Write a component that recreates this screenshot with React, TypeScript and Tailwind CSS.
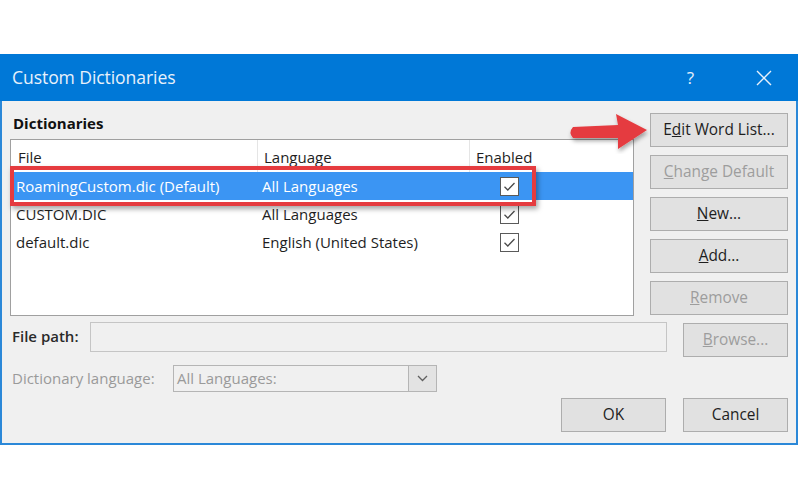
import React from "react"

const FONT = { fontFamily: '"Open Sans", "Noto Sans", Arial, sans-serif' }

const rows = [
  { file: "RoamingCustom.dic (Default)", lang: "All Languages", selected: true },
  { file: "CUSTOM.DIC", lang: "All Languages", selected: false },
  { file: "default.dic", lang: "English (United States)", selected: false },
]

function Check() {
  return (
    <span className="w-[19px] h-[19px] bg-white border border-[#5a5a5a] flex items-center justify-center">
      <svg width="13" height="13" viewBox="0 0 13 13">
        <path d="M1.5 6.8 L4.8 10 L11.5 3" fill="none" stroke="#4a4a4a" strokeWidth="1.3" />
      </svg>
    </span>
  )
}

function Btn({ children, disabled, className = "" }: { children: React.ReactNode; disabled?: boolean; className?: string }) {
  return (
    <div
      className={`h-[34px] bg-[#e1e1e1] border border-[#adadad] flex items-center justify-center text-[15.4px] ${disabled ? "text-[#9d9d9d]" : "text-[#1e1e1e]"} ${className}`}
    >
      {children}
    </div>
  )
}

export default function App() {
  return (
    <div className="w-[799px] h-[500px] bg-white pt-[54px]" style={FONT}>
      <div className="w-[798px] h-[391px] border-x-2 border-b-2 border-[#2b88d8] bg-[#f0f0f0] flex flex-col relative">
        {/* Title bar */}
        <div className="h-[47px] -mx-[2px] bg-[#0078d7] flex items-center pl-[12px] pr-[26px] text-[#e8f1fb]">
          <span className="text-[17.6px] tracking-[-0.1px]">Custom Dictionaries</span>
          <span className="ml-auto text-[17px] mr-[62px]">?</span>
          <svg width="16" height="16" viewBox="0 0 16 16">
            <path d="M1 1 L15 15 M15 1 L1 15" stroke="#e8f1fb" strokeWidth="1.4" />
          </svg>
        </div>

        {/* Top section */}
        <div className="flex pt-[12px] pl-[8px] pr-[8px]">
          <div className="w-[624px] flex flex-col">
            <div className="h-[26px] pl-[3px] text-[15px] font-bold text-[#111] leading-[20px]">Dictionaries</div>
            <div className="h-[177px] bg-white border border-[#a0a0a0] relative text-[15px] text-[#1e1e1e]">
              <div className="h-[32px] flex items-center pl-[3px]">
                <div className="w-[244px] h-full flex items-center pl-[4px] pt-[3px] border-r border-[#e5e5e5]">File</div>
                <div className="w-[212px] h-full flex items-center pl-[6px] pt-[3px] border-r border-[#e5e5e5]">Language</div>
                <div className="flex-1 h-full flex items-center pl-[6px] pt-[3px]">Enabled</div>
              </div>
              {rows.map(r => (
                <div
                  key={r.file}
                  className={`h-[28px] ml-[3px] flex items-center ${r.selected ? "bg-[#3b95f3] text-white" : ""}`}
                >
                  <div className="w-[244px] pl-[2px]">{r.file}</div>
                  <div className="w-[212px] pl-[4px]">{r.lang}</div>
                  <div className="flex-1 pl-[30px]">
                    <Check />
                  </div>
                </div>
              ))}
              {/* highlight box */}
              <div className="absolute left-[-1px] top-[26px] w-[526px] h-[40px] border-[4px] border-[#e53b3f] shadow-[2px_3px_5px_rgba(0,0,0,0.35)]" />
            </div>
          </div>
          <div className="ml-[16px] w-[138px] flex flex-col gap-[8px]">
            <Btn>E<u>d</u>it Word List...</Btn>
            <Btn disabled><u>C</u>hange Default</Btn>
            <Btn><u>N</u>ew...</Btn>
            <Btn><u>A</u>dd...</Btn>
            <Btn disabled><u>R</u>emove</Btn>
          </div>
        </div>

        {/* File path row */}
        <div className="flex items-start mt-[6px] pl-[10px] pr-[8px]">
          <span className="w-[78px] pt-[3px] text-[15px] font-semibold text-[#2a2a2a]">File path:</span>
          <div className="w-[577px] h-[30px] border border-[#c5c5c5] bg-[#f0f0f0]" />
          <Btn disabled className="ml-[16px] w-[105px] mt-[1px]"><u>B</u>rowse...</Btn>
        </div>

        {/* Dictionary language row */}
        <div className="flex items-center mt-[8px] pl-[10px]">
          <span className="w-[161px] text-[15px] text-[#9a9a9a]">Dictionary language:</span>
          <div className="w-[264px] h-[27px] border border-[#b5b5b5] flex items-center">
            <span className="flex-1 pl-[3px] text-[15px] text-[#9a9a9a]">All Languages:</span>
            <div className="w-[28px] h-full bg-[#e3e3e3] border-l border-[#b5b5b5] flex items-center justify-center">
              <svg width="11" height="7" viewBox="0 0 11 7">
                <path d="M1 1 L5.5 5.5 L10 1" fill="none" stroke="#606060" strokeWidth="1.3" />
              </svg>
            </div>
          </div>
        </div>

        {/* OK / Cancel */}
        <div className="flex justify-end mt-[6px] pr-[8px] gap-[17px]">
          <Btn className="w-[105px] h-[33px]">OK</Btn>
          <Btn className="w-[105px] h-[33px]">Cancel</Btn>
        </div>

        {/* red arrow */}
        <svg className="absolute left-[565px] top-[58px]" width="86" height="42" viewBox="0 0 86 42">
          <defs>
            <filter id="sh" x="-20%" y="-30%" width="140%" height="160%">
              <feDropShadow dx="1" dy="3" stdDeviation="2" floodColor="#000" floodOpacity="0.35" />
            </filter>
          </defs>
          <path d="M6 15 L51 13 L49 2 L80 18 L51 37 L51 26 L6 26 Q1 20.5 6 15 Z" fill="#e53b3f" filter="url(#sh)" />
        </svg>
      </div>
    </div>
  )
}
